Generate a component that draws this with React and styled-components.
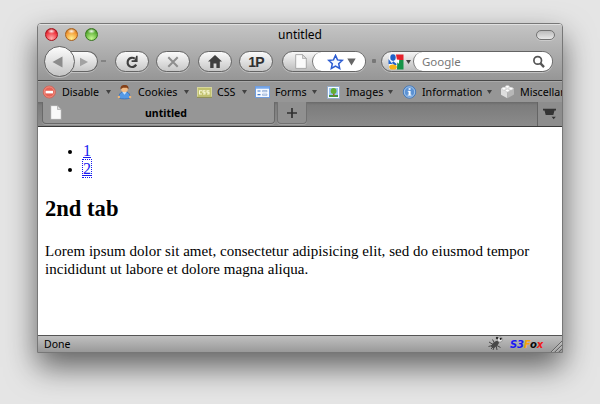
import styled, {createGlobalStyle} from 'styled-components';

const bookmarks = [
  {label: 'Disable', icon: DisableIcon, width: 75, gap: 5, text: 38},
  {label: 'Cookies', icon: CookiesIcon, width: 80, gap: 6, text: 40},
  {label: 'CSS', icon: CssIcon, width: 58, gap: 5, text: 19},
  {label: 'Forms', icon: FormsIcon, width: 71, gap: 5, text: 31},
  {label: 'Images', icon: ImagesIcon, width: 76, gap: 5, text: 36},
  {label: 'Information', icon: InformationIcon, width: 98, gap: 5, text: 59},
  {label: 'Miscellaneous', icon: MiscIcon, width: 110, gap: 5, text: 75},
];

export default function App() {
  return (
    <>
      <GlobalStyle />
      <Window>
        <Chrome>
          <TitleBar>
            <Lights>
              <Light $edge="#a5131c" $color="#f0353f" $glow="#ffb0ae" />
              <Light $edge="#a9611b" $color="#f39a34" $glow="#ffef8f" />
              <Light $edge="#37781d" $color="#62b33a" $glow="#c5f890" />
            </Lights>
            <Title>untitled</Title>
            <ToolbarToggle />
          </TitleBar>
          <Toolbar>
            <BackButton>
              <svg width="12" height="12" viewBox="0 0 12 12">
                <path d="M10.5 .5v11L.5 6z" fill="#8c8c8c" />
              </svg>
            </BackButton>
            <ForwardButton>
              <svg width="10" height="10" viewBox="0 0 10 10">
                <path d="M1 .8v8.4L9 5z" fill="#a2a2a2" />
              </svg>
            </ForwardButton>
            <HistoryArrow />
            <PillButton>
              <svg width="16" height="16" viewBox="0 0 16 16">
                <path d="M12.2 10.6A4.6 4.6 0 1 1 10.8 4.6" fill="none" stroke="#404040" strokeWidth="2.2" />
                <path d="M13.6 1.8v6.1H7.6V6.2h2.6l1-1.4 1-3z" fill="#404040" />
              </svg>
            </PillButton>
            <PillButton $gap={7}>
              <svg width="14" height="14" viewBox="0 0 14 14">
                <path d="M2.3 2.3l9.4 9.4M11.7 2.3l-9.4 9.4" stroke="#8e8e8e" strokeWidth="2" />
              </svg>
            </PillButton>
            <PillButton $gap={8}>
              <svg width="16" height="15" viewBox="0 0 16 15">
                <path d="M8 1l7 6.6h-2.2V14H9.4V9.5H6.6V14H3.2V7.6H1z" fill="#404040" />
              </svg>
            </PillButton>
            <PillButton $gap={7}>1P</PillButton>
            <LocationBar>
              <PageIcon />
              <LocationField>
                <svg width="17" height="16" viewBox="0 0 17 16">
                  <path
                    d="M8.5 1.4l2 4.5 4.8.5-3.6 3.3 1 4.8-4.2-2.5-4.2 2.5 1-4.8-3.6-3.3 4.8-.5z"
                    fill="#f5f9ff"
                    stroke="#2c5cd2"
                    strokeWidth="1.5"
                  />
                </svg>
                <svg width="9" height="8" viewBox="0 0 9 8">
                  <path d="M.3 .5h8.4L4.5 7.5z" fill="#666" />
                </svg>
              </LocationField>
            </LocationBar>
            <Grip />
            <SearchBar>
              <GoogleIcon />
              <SearchArrow width="5" height="4" viewBox="0 0 5 4">
                <path d="M0 0h5L2.5 4z" fill="#444" />
              </SearchArrow>
              <SearchField>
                <SearchText>Google</SearchText>
                <svg width="14" height="14" viewBox="0 0 14 14">
                  <circle cx="5.7" cy="5.4" r="3.8" fill="none" stroke="#555" strokeWidth="1.7" />
                  <path d="M8.5 8.4l3.5 3.7" stroke="#555" strokeWidth="2.3" />
                </svg>
              </SearchField>
            </SearchBar>
          </Toolbar>
        </Chrome>

        <BookmarksBar>
          {bookmarks.map(({label, icon: BookmarkIcon, width, gap, text}) => (
            <Bookmark key={label} $width={width}>
              <BookmarkIcon />
              <BookmarkLabel $gap={gap} $width={text}>
                {label}
              </BookmarkLabel>
              <svg width="5" height="4" viewBox="0 0 5 4">
                <path d="M0 0h5L2.5 4z" fill="#424242" />
              </svg>
            </Bookmark>
          ))}
        </BookmarksBar>

        <TabStrip>
          <Tab>
            <PageIcon />
            <TabTitle>untitled</TabTitle>
          </Tab>
          <NewTab>
            <svg width="10" height="10" viewBox="0 0 10 10">
              <path d="M5 0v10M0 5h10" stroke="#303030" strokeWidth="1.7" />
            </svg>
          </NewTab>
          <TabList>
            <svg width="14" height="12" viewBox="0 0 14 12">
              <path d="M0 .7h13v1.8h-1.5L10.3 7H2.7L1.5 2.5H0zM8.6 8.8h4.2l-2.1 2.4z" fill="#333" />
            </svg>
          </TabList>
        </TabStrip>

        <Page>
          <List>
            <Item>
              <Link>1</Link>
            </Item>
            <Item>
              <Link $focused>2</Link>
            </Item>
          </List>
          <Heading>2nd tab</Heading>
          <Paragraph>
            Lorem ipsum dolor sit amet, consectetur adipisicing elit, sed do eiusmod tempor
            <br />
            incididunt ut labore et dolore magna aliqua.
          </Paragraph>
        </Page>

        <StatusBar>
          <StatusText>Done</StatusText>
          <BugIcon />
          <S3Fox>
            <Tint $color="#1818f4">S3</Tint>
            <Tint $color="#f6a30b">F</Tint>
            <Tint $color="#080808">o</Tint>
            <Tint $color="#f01818">x</Tint>
          </S3Fox>
          <ResizeGrip width="11" height="11" viewBox="0 0 11 11">
            <path d="M0 11L11 0M4 11l7-7M8 11l3-3" stroke="#646464" />
            <path d="M1.4 11L11 1.4M5.4 11L11 5.4" stroke="#d0d0d0" strokeWidth=".7" />
          </ResizeGrip>
        </StatusBar>
      </Window>
    </>
  );
}

function PageIcon() {
  return (
    <svg width="12" height="15" viewBox="0 0 12 15">
      <path d="M.7.6h6.8l3.8 3.9v9.9H.7z" fill="#fafafa" stroke="#999" strokeWidth=".8" />
      <path d="M7.5.6v3.9h3.8z" fill="#ddd" stroke="#999" strokeWidth=".6" />
    </svg>
  );
}

function GoogleIcon() {
  return (
    <svg width="16" height="16" viewBox="0 0 16 16">
      <rect x="1" y="1" width="8" height="14" fill="#f4f7fc" />
      <path d="M8 .5h7.5V6H9z" fill="#e5202b" />
      <path d="M9.5 6h6v9.5H9z" fill="#159347" />
      <path d="M.5 5l4 5H.5z" fill="#2869cf" />
      <ellipse cx="5" cy="3.6" rx="2.7" ry="3.3" fill="#2161c7" />
      <path d="M5.3 7.3l3.6 3-2 1.2-3-2.5z" fill="#2161c7" />
      <ellipse cx="5" cy="13" rx="3.9" ry="2.6" fill="#f6b316" />
      <path d="M8 5.4l3.2.3-.3 4-2.5-2z" fill="#fff" />
    </svg>
  );
}

function DisableIcon() {
  return (
    <svg width="15" height="16" viewBox="0 0 15 16">
      <circle cx="7.3" cy="8" r="6" fill="#e56357" stroke="#cf6459" />
      <circle cx="7.3" cy="8" r="5.1" fill="none" stroke="#f39a8c" strokeWidth=".8" />
      <rect x="3.6" y="6.8" width="7.4" height="2.6" fill="#fff" />
    </svg>
  );
}

function CookiesIcon() {
  return (
    <svg width="15" height="16" viewBox="0 0 15 16">
      <path d="M2 14c-.5-3.2 1.3-5.5 3.4-6h4.2c2.1.5 3.9 2.8 3.4 6-3.2 1.2-7.8 1.2-11 0z" fill="#5599e6" stroke="#366fb9" strokeWidth=".8" />
      <path d="M5.3 8l2.2 2.8L9.7 8z" fill="#c7e1fa" />
      <circle cx="1.9" cy="13" r="1.2" fill="#efb778" />
      <circle cx="13.1" cy="13" r="1.2" fill="#efb778" />
      <circle cx="7.5" cy="5" r="3.3" fill="#f4bd86" />
      <path d="M3.6 5.3C3 2.2 5.3.8 8 1c2.7 0 4.1 2 3.4 4.3L10 3.7H6z" fill="#844018" />
    </svg>
  );
}

function CssIcon() {
  return (
    <svg width="15" height="16" viewBox="0 0 15 16">
      <rect x=".5" y="3.5" width="14" height="9.5" fill="#c1c16e" stroke="#d6d69b" />
      <path d="M0 13.3h15" stroke="#888846" />
      <path d="M5 6.7H2.5V10H5M8.5 6.7H6v1.6h2V10H6M12.5 6.7H10v1.6h2V10h-2" fill="none" stroke="#fafada" strokeWidth="1.1" />
    </svg>
  );
}

function FormsIcon() {
  return (
    <svg width="15" height="16" viewBox="0 0 15 16">
      <rect x=".5" y="2.5" width="14" height="11" fill="#f5f9ff" stroke="#6f9cdd" />
      <path d="M1 3.7h13" stroke="#78a8eb" strokeWidth="2" />
      <path d="M2.5 7h3M2.5 10.7h3" stroke="#3e7bce" strokeWidth="1.2" />
      <path d="M7.5 6.5H12v1.2H7.5zM7.5 10.1H12v1.2H7.5z" fill="#fff" stroke="#82a2d0" strokeWidth=".7" />
    </svg>
  );
}

function ImagesIcon() {
  return (
    <svg width="15" height="16" viewBox="0 0 15 16">
      <rect x="1.5" y="2.5" width="12" height="12" fill="#f8fbff" stroke="#94abc8" />
      <path d="M3 4h9v9H3z" fill="#99c5f4" />
      <path d="M3 11h9v2H3z" fill="#459640" />
      <path d="M7 8h1.6v4H7z" fill="#9b682f" />
      <circle cx="7.6" cy="6.9" r="2.9" fill="#62ae34" />
    </svg>
  );
}

function InformationIcon() {
  return (
    <svg width="15" height="16" viewBox="0 0 15 16">
      <circle cx="7.5" cy="8" r="6.2" fill="#5b92d4" stroke="#4679b9" />
      <circle cx="7.5" cy="8" r="5.2" fill="none" stroke="#b8d2ee" strokeWidth=".8" />
      <path d="M6.6 4.2h2v1.5h-2zM6.6 6.9h2v4.2h-2z" fill="#fff" />
      <path d="M5.8 7.3h2M5.6 11.2h4" stroke="#fff" strokeWidth=".9" />
    </svg>
  );
}

function MiscIcon() {
  return (
    <svg width="15" height="16" viewBox="0 0 15 16">
      <path d="M1 4.5l6.3 3v6.8L1 10.8z" fill="#dedede" />
      <path d="M7.3 7.5L14 4.5v6l-6.7 3.8z" fill="#b7b7b7" />
      <path d="M1 4.5L7.3 2 14 4.5l-6.7 3z" fill="#f4f4f4" />
      <g fill="#fff" stroke="#c3c3c3" strokeWidth=".6">
        <ellipse cx="7.4" cy="2.8" rx="2" ry="1.4" />
        <ellipse cx="3.9" cy="4.7" rx="2" ry="1.4" />
        <ellipse cx="10.9" cy="4.7" rx="2" ry="1.4" />
        <ellipse cx="7.4" cy="6.6" rx="2" ry="1.4" />
      </g>
    </svg>
  );
}

function BugIcon() {
  return (
    <svg width="16" height="16" viewBox="0 0 16 16">
      <path d="M1 6l5 3-5.5 1.5M4.5 3.5L7 8M5 14l1.5-4M9 14l-1-5 4.5 2.5M3 13l4-4" fill="none" stroke="#484848" />
      <ellipse cx="7" cy="8.4" rx="4.6" ry="2.3" transform="rotate(-40 7 8.4)" fill="#484848" />
      <circle cx="12" cy="3.5" r="2.6" fill="#e6e6e6" stroke="#666" strokeWidth=".5" />
      <circle cx="12.7" cy="2.8" r="1.1" fill="#151515" />
      <circle cx="9" cy="2" r="1.2" fill="#303030" />
    </svg>
  );
}

const GlobalStyle = createGlobalStyle`
  * {
    box-sizing: border-box;
  }

  html {
    background: #e5e5e5;
  }

  body {
    display: flow-root;
    margin: 0;
    height: 404px;
    overflow: hidden;
    font-family: 'Noto Sans', 'Open Sans', sans-serif;
  }

  svg {
    display: block;
    flex-shrink: 0;
  }
`;

const Window = styled.main`
  width: 526px;
  height: 330px;
  margin: 23px 0 0 37px;
  border: 1px solid #777;
  border-radius: 4px 4px 0 0;
  overflow: hidden;
  display: flex;
  flex-direction: column;
  background: #fff;
  box-shadow: 0 14px 31px rgba(0, 0, 0, 0.58);
`;

const Chrome = styled.header`
  height: 57px;
  flex-shrink: 0;
  background: linear-gradient(#c4c4c4, #969696);
  border-top: 1px solid #e0e0e0;
  border-bottom: 1px solid #484848;
`;

const TitleBar = styled.div`
  display: flex;
  align-items: center;
  height: 19px;
  padding: 0 7px 0 7px;
`;

const Lights = styled.div`
  display: flex;
  gap: 7px;
  width: 84px;
`;

const Light = styled.span`
  width: 13px;
  height: 13px;
  border: 1px solid ${({$edge}) => $edge};
  border-radius: 50%;
  background:
    radial-gradient(ellipse 4px 2.5px at 50% 20%, rgba(255, 255, 255, 0.95), rgba(255, 255, 255, 0) 100%),
    radial-gradient(circle at 50% 85%, ${({$glow}) => $glow}, ${({$color}) => $color} 60%, ${({$edge}) => $edge});
`;

const Title = styled.span`
  flex: 1;
  padding-right: 67px;
  margin-left: 2px;
  text-align: center;
  font-size: 12px;
  line-height: 18px;
`;

const ToolbarToggle = styled.span`
  width: 19px;
  height: 10px;
  border: 1.5px solid #737373;
  border-radius: 5px;
  background: linear-gradient(#bbb, #e8e8e8);
  box-shadow: 0 1px 0 #ccc;
`;

const Toolbar = styled.div`
  display: flex;
  align-items: center;
  height: 35px;
  padding-left: 6px;
`;

const BackButton = styled.span`
  display: flex;
  align-items: center;
  justify-content: center;
  width: 31px;
  height: 31px;
  padding-right: 3px;
  z-index: 1;
  border: 1px solid #656565;
  border-radius: 50%;
  background: linear-gradient(#fcfcfc, #c4c4c4);
  box-shadow: 0 1px 0 #bbb;
`;

const PillButton = styled.span`
  display: flex;
  align-items: center;
  justify-content: center;
  width: 34px;
  height: 21px;
  margin-left: ${({$gap = 0}) => $gap}px;
  border: 1px solid #646464;
  border-radius: 11px;
  background: linear-gradient(#fafafa, #c7c7c7);
  box-shadow: 0 1px 0 #c2c2c2;
  color: #303030;
  font: bold 14px 'Liberation Sans', sans-serif;
  letter-spacing: -0.7px;
`;

const ForwardButton = styled(PillButton)`
  width: 28px;
  margin-left: -5px;
  border-left: 0;
  border-radius: 0 11px 11px 0;
`;

const HistoryArrow = styled.span`
  width: 5px;
  height: 2px;
  margin: 0 9px 2px 3px;
  background: #838383;
`;

const LocationBar = styled.div`
  display: flex;
  align-items: center;
  justify-content: space-between;
  width: 84px;
  height: 21px;
  margin-left: 9px;
  padding-left: 12px;
  border: 1px solid #646464;
  border-radius: 11px;
  background: linear-gradient(#f7f7f7, #bdbdbd);
  box-shadow: 0 1px 0 #c2c2c2;
`;

const LocationField = styled.div`
  display: flex;
  align-items: center;
  gap: 3px;
  width: 53px;
  height: 19px;
  padding-left: 14px;
  border-left: 1px solid #777;
  border-radius: 10px;
  background: #fff;
`;

const Grip = styled.span`
  width: 4px;
  height: 4px;
  margin: 0 5px 2px 6px;
  border-radius: 1px;
  background: #777;
`;

const SearchBar = styled.div`
  display: flex;
  align-items: center;
  width: 172px;
  height: 21px;
  padding-left: 6px;
  border: 1px solid #646464;
  border-radius: 11px;
  background: linear-gradient(#f5f5f5, #bcbcbc);
  box-shadow: 0 1px 0 #c2c2c2;
`;

const SearchArrow = styled.svg`
  margin-left: 2px;
`;

const SearchField = styled.div`
  display: flex;
  align-items: center;
  justify-content: space-between;
  flex: 1;
  height: 19px;
  margin-left: 2px;
  padding: 0 6px 0 8px;
  border-left: 1px solid #777;
  border-radius: 10px;
  background: #fff;
`;

const SearchText = styled.span`
  color: #777;
  font-size: 11.5px;
  line-height: 18px;
`;

const BookmarksBar = styled.nav`
  display: flex;
  align-items: center;
  height: 21px;
  padding-left: 4px;
  flex-shrink: 0;
  overflow: hidden;
  background: #969696;
  border-top: 1px solid #a9a9a9;
`;

const Bookmark = styled.span`
  display: flex;
  align-items: center;
  flex-shrink: 0;
  width: ${({$width}) => $width}px;
`;

const BookmarkLabel = styled.span`
  width: ${({$width}) => $width}px;
  margin: 0 6px 0 ${({$gap}) => $gap}px;
  font-size: 10.7px;
  line-height: 18px;
  white-space: nowrap;
`;

const TabStrip = styled.div`
  display: flex;
  height: 25px;
  flex-shrink: 0;
  padding-left: 4px;
  background: linear-gradient(#696969, #7c7c7c 3px, #8b8b8b);
  border-bottom: 1px solid #393939;
`;

const Tab = styled.div`
  display: flex;
  align-items: center;
  width: 233px;
  height: 22px;
  padding-left: 7px;
  border: 1px solid #696969;
  border-top: 0;
  border-radius: 0 0 4px 4px;
  background: #969696;
  box-shadow: 0 1px 0 #a1a1a1;
`;

const TabTitle = styled.span`
  flex: 1;
  padding-right: 4px;
  text-align: center;
  font-size: 10.5px;
  font-weight: 700;
`;

const NewTab = styled.span`
  display: flex;
  align-items: center;
  justify-content: center;
  width: 30px;
  height: 22px;
  margin-left: 2px;
  border: 1px solid #717171;
  border-top: 0;
  border-radius: 0 0 4px 4px;
  background: #909090;
  box-shadow: 0 1px 0 #a1a1a1;
`;

const TabList = styled.span`
  display: flex;
  align-items: center;
  width: 25px;
  margin-left: auto;
  padding-left: 5px;
  border-left: 1px solid #646464;
  background: #8d8d8d;
`;

const Page = styled.section`
  flex: 1;
  padding: 15px 7px;
  font: 16px/18px 'Liberation Serif', serif;
`;

const List = styled.ul`
  margin: 0;
  padding-left: 38px;
`;

const Item = styled.li`
  &::marker {
    font-size: 13px;
  }
`;

const Link = styled.a`
  color: #1a1af0;
  text-decoration: underline;
  outline: ${({$focused}) => ($focused ? '1px dotted #1a1af0' : 'none')};
`;

const Heading = styled.h2`
  margin: 17px 0 0;
  font-size: 22.6px;
  line-height: 28px;
`;

const Paragraph = styled.p`
  margin: 19px 0 0;
  font-size: 15px;
  letter-spacing: 0.03px;
  white-space: nowrap;
`;

const StatusBar = styled.footer`
  display: flex;
  align-items: center;
  flex-shrink: 0;
  height: 17px;
  padding-left: 6px;
  background: linear-gradient(#c0c0c0, #999);
  border-top: 1px solid #555;
`;

const StatusText = styled.span`
  flex: 1;
  font-size: 10.5px;
  line-height: 16px;
`;

const S3Fox = styled.span`
  width: 41px;
  margin-left: 6px;
  font: italic bold 10px 'DejaVu Sans', sans-serif;
  letter-spacing: -0.1px;
`;

const ResizeGrip = styled.svg`
  align-self: flex-end;
`;

const Tint = styled.span`
  color: ${({$color}) => $color};
`;
